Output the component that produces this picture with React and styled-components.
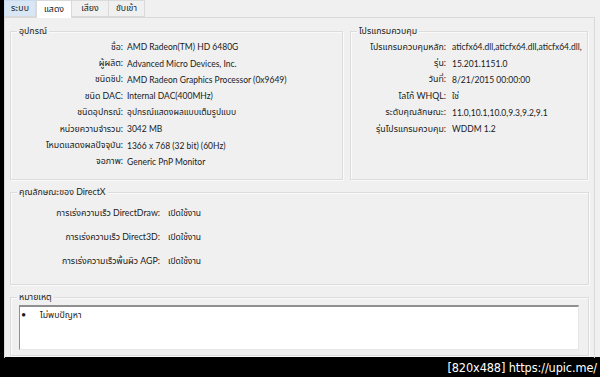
import React from "react";
import styled, { createGlobalStyle } from "styled-components";

const Global = createGlobalStyle`
  html, body { margin: 0; padding: 0; background: #000; }
  body { width: 600px; height: 377px; overflow: hidden; }
`;

const FONT = `Lato, "Noto Sans Thai", "Noto Sans", "Liberation Sans", sans-serif`;

const Frame = styled.div`
  width: 600px;
  height: 377px;
  box-sizing: border-box;
  padding-left: 4px;
  background: #000;
  display: flex;
  flex-direction: column;
  font-family: ${FONT};
  font-size: 8.8px;
  color: #1a1a1a;
`;

const Screen = styled.div`
  height: 357px;
  background: #f0f0f0;
  display: flex;
  flex-direction: column;
`;

const TabBar = styled.div`
  height: 17px;
  display: flex;
  align-items: stretch;
  position: relative;
  z-index: 1;
`;

const Tab = styled.div`
  width: ${(p) => p.$w}px;
  box-sizing: border-box;
  display: flex;
  align-items: center;
  justify-content: center;
  height: ${(p) => (p.$active ? 18 : 17)}px;
  background: ${(p) => (p.$active ? "#fff" : p.$hover ? "#d9e7f4" : "#f0f0f0")};
  border: 1px solid ${(p) => (p.$active ? "#d9d9d9" : p.$hover ? "#c9dcef" : "#dadada")};
  border-bottom: ${(p) => (p.$active ? "none" : "1px solid #d9d9d9")};
  border-left: ${(p) => (p.$first || p.$active ? "" : "none")};
  line-height: 1;
  padding-bottom: 1px;
`;

const Panel = styled.div`
  flex: 1;
  margin-right: 5px;
  border: 1px solid #d9d9d9;
  border-bottom: none;
  box-sizing: border-box;
  padding: 13px 5px 2px 5px;
  display: flex;
  flex-direction: column;
  gap: 12px;
`;

const TopRow = styled.div`
  display: grid;
  grid-template-columns: 333px 238px;
  column-gap: 7px;
  height: 149px;
`;

const Group = styled.div`
  position: relative;
  box-sizing: border-box;
  border: 1px solid #dcdcdc;
  box-shadow: inset 1px 1px 0 #fafafa, 1px 1px 0 #fafafa;
  height: ${(p) => (p.$h ? `${p.$h}px` : "auto")};
  padding: ${(p) => p.$pad || "0"};
`;

const Legend = styled.span`
  position: absolute;
  top: -7px;
  left: 6px;
  padding: 0 2px;
  background: #f0f0f0;
  line-height: 12px;
  white-space: nowrap;
`;

const Rows = styled.div`
  display: grid;
  grid-template-columns: ${(p) => p.$label}px 1fr;
  column-gap: ${(p) => p.$gap}px;
  grid-auto-rows: ${(p) => p.$row}px;
  align-items: center;
`;

const Label = styled.div`
  text-align: right;
  white-space: nowrap;
`;

const Value = styled.div`
  white-space: nowrap;
  overflow: hidden;
  font-size: 8.5px;
`;

const NoteBox = styled.div`
  height: 100%;
  box-sizing: border-box;
  background: #fff;
  border-top: 2px solid #8f8f8f;
  border-left: 1px solid #8f8f8f;
  border-right: 1px solid #e6e6e6;
  border-bottom: 1px solid #e6e6e6;
  padding: 2px 0 0 1px;
`;

const NoteItem = styled.div`
  display: flex;
  align-items: center;
  line-height: 12px;
`;

const Bullet = styled.span`
  width: 19px;
  font-size: 9px;
`;

const Footer = styled.div`
  flex: 1;
  display: flex;
  align-items: center;
  justify-content: flex-end;
  padding-right: 3px;
  color: #fff;
  font-family: "DejaVu Sans Condensed", "DejaVu Sans", sans-serif;
  font-size: 12.6px;
  letter-spacing: -0.1px;
`;

const device = [
  ["ชื่อ:", "AMD Radeon(TM) HD 6480G"],
  ["ผู้ผลิต:", "Advanced Micro Devices, Inc."],
  ["ชนิดชิป:", "AMD Radeon Graphics Processor (0x9649)"],
  ["ชนิด DAC:", "Internal DAC(400MHz)"],
  ["ชนิดอุปกรณ์:", "อุปกรณ์แสดงผลแบบเต็มรูปแบบ"],
  ["หน่วยความจำรวม:", "3042 MB"],
  ["โหมดแสดงผลปัจจุบัน:", "1366 x 768 (32 bit) (60Hz)"],
  ["จอภาพ:", "Generic PnP Monitor"],
];

const driver = [
  ["โปรแกรมควบคุมหลัก:", "aticfx64.dll,aticfx64.dll,aticfx64.dll,"],
  ["รุ่น:", "15.201.1151.0"],
  ["วันที่:", "8/21/2015 00:00:00"],
  ["โลโก้ WHQL:", "ใช่"],
  ["ระดับคุณลักษณะ:", "11.0,10.1,10.0,9.3,9.2,9.1"],
  ["รุ่นโปรแกรมควบคุม:", "WDDM 1.2"],
];

const dx = [
  ["การเร่งความเร็ว DirectDraw:", "เปิดใช้งาน"],
  ["การเร่งความเร็ว Direct3D:", "เปิดใช้งาน"],
  ["การเร่งความเร็วพื้นผิว AGP:", "เปิดใช้งาน"],
];

const tabs = [
  { t: "ระบบ", w: 32, hover: true },
  { t: "แสดง", w: 36, active: true },
  { t: "เสียง", w: 37 },
  { t: "ขับเข้า", w: 36 },
];

function RowList({ items, label, gap, row }) {
  return (
    <Rows $label={label} $gap={gap} $row={row}>
      {items.map(([l, v]) => (
        <React.Fragment key={l}>
          <Label>{l}</Label>
          <Value>{v}</Value>
        </React.Fragment>
      ))}
    </Rows>
  );
}

export default function App() {
  return (
    <>
      <Global />
      <Frame>
        <Screen>
          <TabBar>
            {tabs.map((t, i) => (
              <Tab key={t.t} $w={t.w} $active={t.active} $hover={t.hover} $first={i === 0}>
                {t.t}
              </Tab>
            ))}
          </TabBar>
          <Panel>
            <TopRow>
              <Group $pad="7px 0 0 0">
                <Legend>อุปกรณ์</Legend>
                <RowList items={device} label={112} gap={4} row={16.4} />
              </Group>
              <Group $pad="7px 0 0 0">
                <Legend>โปรแกรมควบคุม</Legend>
                <RowList items={driver} label={95} gap={6} row={16.4} />
              </Group>
            </TopRow>
            <Group $h={93} $pad="8px 0 0 0">
              <Legend>คุณลักษณะของ DirectX</Legend>
              <RowList items={dx} label={149} gap={8} row={24.3} />
            </Group>
            <Group $h={59} $pad="7px 9px 5px 8px">
              <Legend>หมายเหตุ</Legend>
              <NoteBox>
                <NoteItem>
                  <Bullet>•</Bullet>
                  <span>ไม่พบปัญหา</span>
                </NoteItem>
              </NoteBox>
            </Group>
          </Panel>
        </Screen>
        <Footer>[820x488] https://upic.me/</Footer>
      </Frame>
    </>
  );
}
